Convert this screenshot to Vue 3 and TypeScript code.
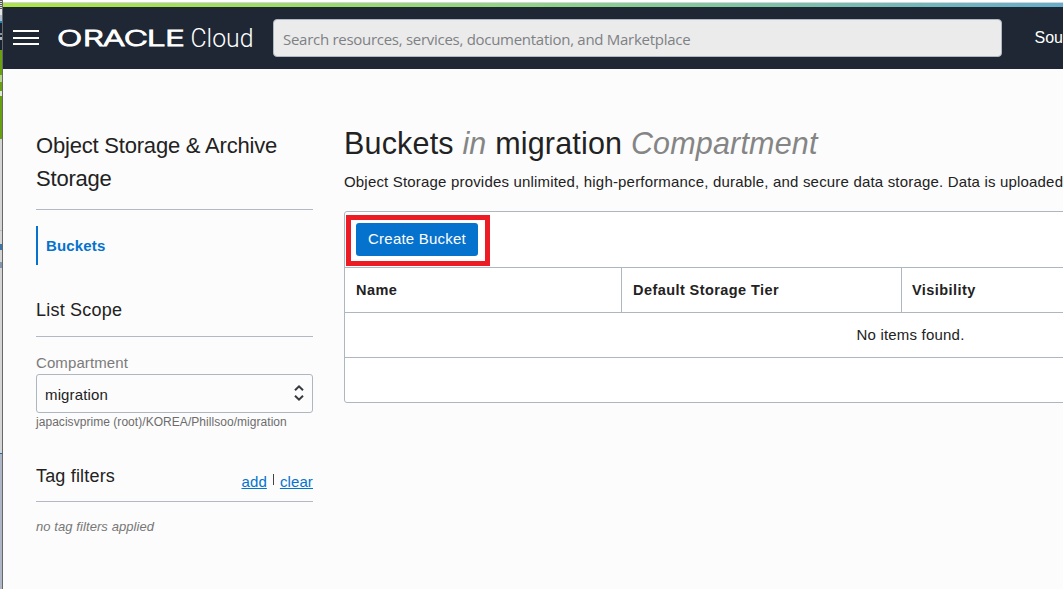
<script setup lang="ts">
const columns: string[] = ['Name', 'Default Storage Tier', 'Visibility']
</script>

<template>
  <div class="screen">
    <div class="backdrop">
      <i class="b1"></i><i class="b2"></i><i class="b3"></i><i class="b4"></i><i class="b5"></i>
      <i class="b6"></i><i class="b7"></i><i class="b8"></i><i class="b9"></i>
    </div>
    <div class="window">
      <div class="edge"></div>
      <div class="rainbow"></div>
      <header class="topbar">
        <button class="burger" aria-label="Menu"><i></i><i></i><i></i></button>
        <svg class="logo" width="200" height="30" viewBox="0 0 200 30">
          <text class="brand" transform="scale(1.55 1)" x="-0.6 16 28.900 42.400 57.200 69.100" y="23.400">ORACLE</text>
          <text class="cloud" x="132.500" y="24" textLength="63" lengthAdjust="spacingAndGlyphs">Cloud</text>
        </svg>
        <div class="search"><span>Search resources, services, documentation, and Marketplace</span></div>
        <span class="region">Sou</span>
      </header>
      <div class="body">
        <aside class="side">
          <h2 class="title">Object Storage &amp; Archive<br />Storage</h2>
          <nav class="nav"><a>Buckets</a></nav>
          <h3 class="scope">List Scope</h3>
          <label class="label">Compartment</label>
          <div class="select">
            <span>migration</span>
            <svg width="12" height="18" viewBox="0 0 12 18" fill="none" stroke="#36393d" stroke-width="2">
              <path d="M2 6.300 6 2.300 10 6.300M2 11.700 6 15.700 10 11.700" />
            </svg>
          </div>
          <div class="path">japacisvprime (root)/KOREA/Phillsoo/migration</div>
          <div class="tags">
            <h3>Tag filters</h3>
            <div class="links"><a>add</a><i></i><a>clear</a></div>
          </div>
          <div class="none">no tag filters applied</div>
        </aside>
        <main class="main">
          <h1>Buckets <em>in</em> migration <em>Compartment</em></h1>
          <p class="desc">Object Storage provides unlimited, high-performance, durable, and secure data storage. Data is uploaded</p>
          <section class="table">
            <div class="tools">
              <div class="highlight"><button class="create">Create Bucket</button></div>
            </div>
            <div class="head">
              <div v-for="c in columns" :key="c" class="th">{{ c }}</div>
            </div>
            <div class="empty">No items found.</div>
            <div class="foot"></div>
          </section>
        </main>
      </div>
    </div>
  </div>
</template>

<style>
body { overflow: hidden; }
</style>

<style scoped>
* { box-sizing: border-box; }
.screen {
  display: flex; width: 1063px; height: 589px; overflow: hidden; background: #fcfcfc;
  font-family: "Liberation Sans", Arial, sans-serif; color: #222; white-space: nowrap;
}
h1, h2, h3, p { margin: 0; font-weight: 400; }
button { border: 0; padding: 0; font-family: inherit; }
.backdrop { width: 3px; flex: none; border-right: 1px solid #686868; display: flex; flex-direction: column; }
.backdrop i { display: block; flex: none; }
.b1 { height: 9px; background: repeating-linear-gradient(#555 0 1px, #ddd 1px 2px); }
.b2 { height: 6px; background: #e4e4e4; }
.b3 { height: 6px; background: #aebdc8; }
.b4 { height: 2px; background: #1687c4; }
.b5 { height: 27px; background: linear-gradient(#172233 10px, #8d939b 10px 12px, #172233 12px 14px, #b4b8bd 14px 17px, #172233 17px); }
.b6 { height: 89px; background: linear-gradient(#68a00e 25px, #b8d48c 25px 32px, #68a00e 32px 41px, #dfe9cf 41px 46px, #68a00e 46px); }
.b7 { height: 314px; background: linear-gradient(#d5d5d5 91px, #bbb 91px 92px, #d5d5d5 92px 105px, #3f74a6 105px 111px, #d5d5d5 111px 123px, #8496ad 123px 129px, #d5d5d5 129px); }
.b8 { height: 1px; background: #1769aa; }
.b9 { height: 135px; background: #adb7c7; }
.window { width: 1060px; flex: none; }
.edge { height: 3px; background: #fff; border-bottom: 1px solid #d4d4dc; }
.rainbow { height: 4px; background: linear-gradient(90deg, #ace447, #91d287 50%, #67adca); }
.topbar { height: 62px; background: #1e2733; display: flex; align-items: flex-start; overflow: hidden; }
.burger { width: 26px; margin: 23px 0 0 10px; background: none; display: flex; flex-direction: column; gap: 5px; flex: none; }
.burger i { height: 2px; width: 26px; background: #fff; }
.burger i:nth-child(2) { margin-bottom: -1px; }
.logo { margin: 16px 0 0 19px; flex: none; fill: #fff; overflow: visible; }
.brand { font: 300 21.500px Inter, sans-serif; stroke: #fff; stroke-width: 1.2px; vector-effect: non-scaling-stroke; }
.cloud { font: 300 25px Roboto, sans-serif; }
.search {
  width: 729px; height: 38px; margin: 12px 0 0 15px; flex: none; background: #ebebeb;
  border: 1px solid #aeb8c2; border-radius: 4px; padding: 0 9px; line-height: 39px;
  font-family: "Open Sans", "Noto Sans", sans-serif; font-size: 15px; letter-spacing: -.28px; color: #7e8184;
}
.region { margin: 21px 0 0 32.500px; font-size: 16px; line-height: 20px; color: #fff; flex: none; }
.body { display: flex; }
.side { width: 277px; margin: 60px 0 0 33px; flex: none; }
.title { font-size: 22px; line-height: 33px; height: 81px; letter-spacing: -.2px; border-bottom: 1px solid #b3b8c2; }
.nav { margin-top: 16px; height: 39px; border-left: 2px solid #0572ce; padding-left: 8px; line-height: 39px; font-size: 15px; font-weight: 700; letter-spacing: .15px; color: #0572ce; }
.scope { margin-top: 32px; font-size: 18px; line-height: 26px; height: 40px; letter-spacing: .22px; border-bottom: 1px solid #b3b8c2; }
.label { display: block; margin-top: 17px; font-size: 15px; line-height: 18px; height: 20px; letter-spacing: .1px; color: #7b7b7b; }
.select { height: 39px; border: 1px solid #aeb6c0; border-radius: 3px; display: flex; justify-content: space-between; align-items: center; padding: 2px 7px 0 8px; font-size: 15px; letter-spacing: .14px; }
.select svg { margin-top: -4px; }
.path { font-size: 12px; line-height: 16px; margin-top: 1px; letter-spacing: .045px; color: #6c6c6c; }
.tags { margin-top: 33px; height: 39px; border-bottom: 1px solid #b3b8c2; display: flex; justify-content: space-between; }
.tags h3 { font-size: 18px; line-height: 26px; letter-spacing: .18px; }
.links { display: flex; font-size: 15px; line-height: 18px; padding-top: 10px; letter-spacing: .12px; color: #0572ce; }
.links a { text-decoration: underline; }
.links i { width: 1px; height: 11px; background: #444; margin: 1px 6px 0; }
.none { margin-top: 16px; font-size: 13px; line-height: 18px; font-style: italic; letter-spacing: .08px; color: #777; }
.main { margin: 54px 0 0 31px; width: 1131px; flex: none; }
h1 { font-size: 30.500px; line-height: 40px; letter-spacing: .18px; }
h1 em { color: #858585; }
.desc { font-size: 15px; line-height: 20px; margin-top: 9px; letter-spacing: .182px; }
.table { margin-top: 19px; border: 1px solid #aeb6c0; border-radius: 3px; background: #fff; }
.tools { height: 55px; padding: 3px 1px; }
.highlight { width: 144px; height: 51px; border: 5px solid #ed1c24; padding: 3px 5px; }
.create { width: 122px; height: 33px; display: block; background: #0572ce; color: #fff; border-radius: 3px; font-size: 15px; line-height: 31px; padding-bottom: 2px; letter-spacing: .22px; }
.head { display: grid; grid-template-columns: 277px 280px 1fr; height: 46px; border: solid #aeb6c0; border-width: 1px 0; }
.th { padding-left: 11px; line-height: 44px; font-size: 14.500px; font-weight: 700; letter-spacing: .43px; border-right: 1px solid #aeb6c0; }
.th:last-child { border-right: 0; padding-left: 10px; }
.empty { height: 45px; line-height: 44px; font-size: 15px; text-align: center; letter-spacing: .2px; padding-left: 2px; border-bottom: 1px solid #aeb6c0; }
.foot { height: 44px; }
</style>
